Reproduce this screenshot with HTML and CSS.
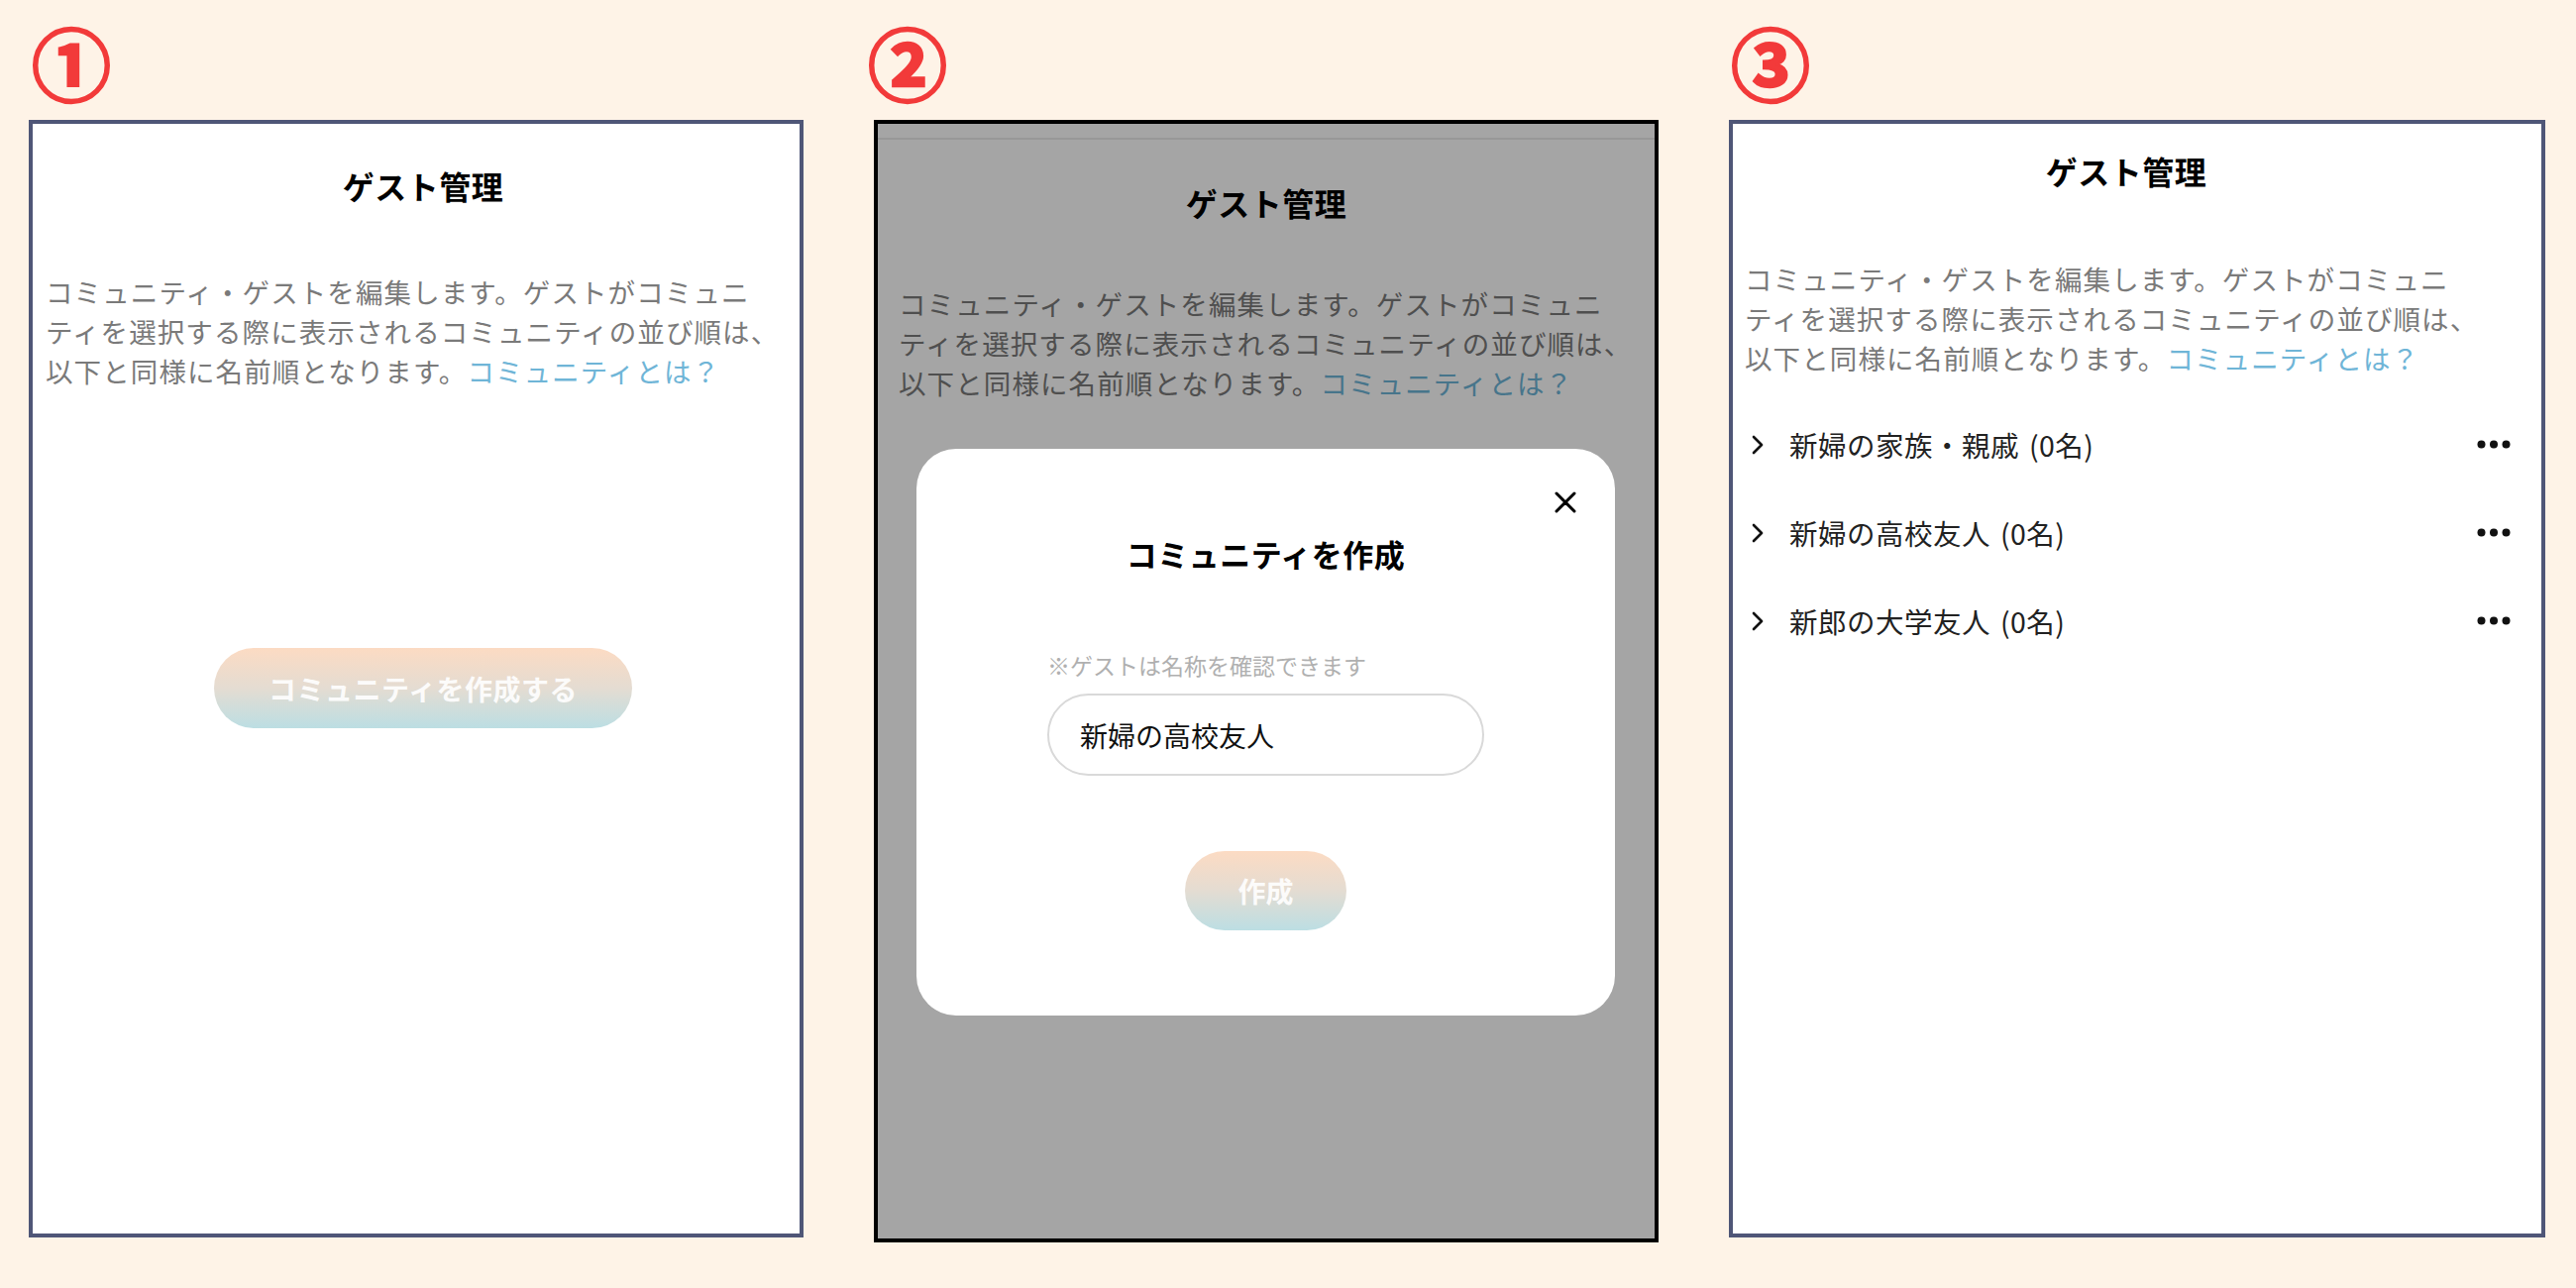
FILE: index.html
```html
<!DOCTYPE html>
<html lang="ja">
<head>
<meta charset="utf-8">
<title>ゲスト管理</title>
<link rel="stylesheet" href="styles.css">
</head>
<body>
<div class="page">
  <section class="col col-1">
    <div class="num num-1">①</div>
    <div class="panel">
      <div class="screen screen-1">
        <h1 class="title">ゲスト管理</h1>
        <p class="desc desc-1"><span>コミュニティ・ゲストを編集します。ゲストがコミュニティを選択する際に表示されるコミュニティの並び順は、</span><span>以下と同様に名前順となります。</span><a class="link">コミュニティとは？</a></p>
        <div class="cta-wrap"><button class="grad-btn btn-create">コミュニティを作成する</button></div>
      </div>
    </div>
  </section>

  <section class="col col-2">
    <div class="num num-2">②</div>
    <div class="panel panel-2">
      <div class="screen screen-2">
        <div class="statusbar"></div>
        <h1 class="title title-2">ゲスト管理</h1>
        <p class="desc desc-2"><span>コミュニティ・ゲストを編集します。ゲストがコミュニティを選択する際に表示されるコミュニティの並び順は、</span><span>以下と同様に名前順となります。</span><a class="link">コミュニティとは？</a></p>
      </div>
      <div class="overlay">
        <div class="modal">
          <svg class="close" viewBox="0 0 22 22" width="22" height="22"><path d="M2 2 L20 20 M20 2 L2 20" stroke="#000" stroke-width="3" stroke-linecap="round" fill="none"/></svg>
          <h2 class="modal-title">コミュニティを作成</h2>
          <div class="form">
            <div class="hint">※ゲストは名称を確認できます</div>
            <div class="input">新婦の高校友人</div>
          </div>
          <button class="grad-btn btn-make">作成</button>
        </div>
      </div>
    </div>
  </section>

  <section class="col col-3">
    <div class="num num-3">③</div>
    <div class="panel">
      <div class="screen screen-3">
        <h1 class="title">ゲスト管理</h1>
        <p class="desc desc-3"><span>コミュニティ・ゲストを編集します。ゲストがコミュニティを選択する際に表示されるコミュニティの並び順は、</span><span>以下と同様に名前順となります。</span><a class="link">コミュニティとは？</a></p>
        <ul class="list">
          <li class="row">
            <svg class="chev" viewBox="0 0 15 22" width="15" height="22"><path d="M3 3 L11 11 L3 19" stroke="#111" stroke-width="2.6" fill="none" stroke-linecap="round" stroke-linejoin="round"/></svg>
            <span class="row-label">新婦の家族・親戚 (0名)</span>
            <svg class="dots" viewBox="0 0 34 9" width="34" height="9"><circle cx="4.5" cy="4.5" r="4" fill="#111"/><circle cx="17" cy="4.5" r="4" fill="#111"/><circle cx="29.5" cy="4.5" r="4" fill="#111"/></svg>
          </li>
          <li class="row">
            <svg class="chev" viewBox="0 0 15 22" width="15" height="22"><path d="M3 3 L11 11 L3 19" stroke="#111" stroke-width="2.6" fill="none" stroke-linecap="round" stroke-linejoin="round"/></svg>
            <span class="row-label">新婦の高校友人 (0名)</span>
            <svg class="dots" viewBox="0 0 34 9" width="34" height="9"><circle cx="4.5" cy="4.5" r="4" fill="#111"/><circle cx="17" cy="4.5" r="4" fill="#111"/><circle cx="29.5" cy="4.5" r="4" fill="#111"/></svg>
          </li>
          <li class="row">
            <svg class="chev" viewBox="0 0 15 22" width="15" height="22"><path d="M3 3 L11 11 L3 19" stroke="#111" stroke-width="2.6" fill="none" stroke-linecap="round" stroke-linejoin="round"/></svg>
            <span class="row-label">新郎の大学友人 (0名)</span>
            <svg class="dots" viewBox="0 0 34 9" width="34" height="9"><circle cx="4.5" cy="4.5" r="4" fill="#111"/><circle cx="17" cy="4.5" r="4" fill="#111"/><circle cx="29.5" cy="4.5" r="4" fill="#111"/></svg>
          </li>
        </ul>
      </div>
    </div>
  </section>
</div>
</body>
</html>
```

FILE: styles.css
```css
* { box-sizing: border-box; }

body {
  margin: 0;
  background: #fef3e7;
  font-family: "Noto Sans CJK JP", "Noto Sans", sans-serif;
}

.page {
  display: flex;
  align-items: flex-start;
  padding-left: 29px;
}

.col {
  display: flex;
  flex-direction: column;
}
.col-1 { width: 782px; }
.col-2 { width: 792px; margin-left: 71px; }
.col-3 { width: 824px; margin-left: 71px; }

.num {
  height: 80px;
  margin-top: 21px;
  margin-bottom: 20px;
  font-size: 80px;
  line-height: 80px;
  font-weight: 700;
  color: #f23a3a;
  -webkit-text-stroke: 2.5px #f23a3a;
}
.num-1 { margin-left: 3px; }
.num-2 { margin-left: -6px; }
.num-3 { margin-left: 2px; }

.panel {
  position: relative;
  height: 1128px;
  border: 4px solid #4f5677;
  background: #fff;
  overflow: hidden;
}
.panel-2 {
  height: 1133px;
  border-color: #000;
  box-shadow: 0 1px 0 #d3cabe;
}

.screen-1 { width: 788px; padding-top: 40px; }
.screen-2 { width: 784px; }
.screen-3 { width: 794px; padding-top: 25px; }

.statusbar {
  height: 16px;
  border-bottom: 2px solid #eaeaea;
}

.title {
  margin: 0;
  font-size: 32px;
  line-height: 44px;
  font-weight: 700;
  letter-spacing: 0.5px;
  text-align: center;
  color: #000;
}
.title-2 { margin-top: 41px; }

.desc {
  width: 758px;
  margin: 0;
  font-size: 27.5px;
  line-height: 40px;
  letter-spacing: 1.1px;
  color: #7a7a7a;
  line-break: strict;
}
.desc-1 { margin: 65px 0 0 13px; }
.desc-2 { margin: 60px 0 0 21px; }
.desc-3 { margin: 67px 0 0 12px; }

.link {
  display: inline-block;
  line-height: 40px;
  color: #6fb5d7;
  text-decoration: none;
}

.cta-wrap {
  display: flex;
  justify-content: center;
  margin-top: 260px;
}

.grad-btn {
  border: none;
  border-radius: 999px;
  background: linear-gradient(180deg, #fcdbc3 0%, #e4dcd2 50%, #bcdee3 100%);
  color: rgba(255, 255, 255, 0.92);
  font-family: inherit;
  font-size: 28px;
  font-weight: 700;
  padding: 0;
}
.btn-create {
  width: 422px;
  height: 81px;
  letter-spacing: 0.5px;
}

/* modal state */
.overlay {
  position: absolute;
  inset: 0;
  background: rgba(0, 0, 0, 0.353);
}
.modal {
  position: relative;
  width: 705px;
  height: 572px;
  margin: 328px 0 0 39px;
  padding-top: 85px;
  border-radius: 40px;
  background: #fff;
  display: flex;
  flex-direction: column;
  align-items: center;
}
.close {
  position: absolute;
  top: 43px;
  right: 39px;
}
.modal-title {
  margin: 0;
  font-size: 31px;
  line-height: 42px;
  font-weight: 700;
  color: #000;
  letter-spacing: 0.5px;
}
.form {
  width: 441px;
  margin-top: 74px;
}
.hint {
  font-size: 23px;
  line-height: 34px;
  color: #b0b0b0;
}
.input {
  height: 83px;
  margin-top: 12px;
  padding-left: 31px;
  border: 2px solid #d9d9d9;
  border-radius: 999px;
  display: flex;
  align-items: center;
  font-size: 28px;
  color: #111;
}
.btn-make {
  width: 163px;
  height: 80px;
  margin-top: 76px;
}

/* list */
.list {
  list-style: none;
  margin: 23px 0 0;
  padding: 0;
}
.row {
  display: flex;
  align-items: center;
  height: 89px;
  padding: 0 9px 0 18px;
}
.chev {
  flex: none;
  margin-right: 24px;
}
.row-label {
  flex: 1;
  font-size: 28.5px;
  letter-spacing: 0.5px;
  word-spacing: 3px;
  color: #222;
}
.dots { flex: none; }
```
